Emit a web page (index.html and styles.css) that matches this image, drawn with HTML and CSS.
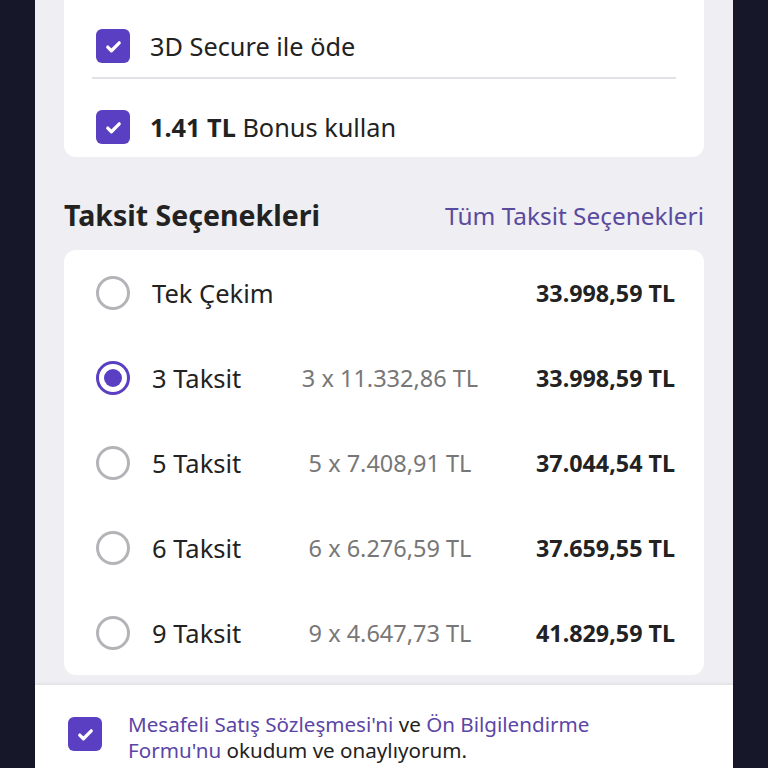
FILE: index.html
```html
<!DOCTYPE html>
<html lang="tr">
<head>
  <meta charset="UTF-8">
  <meta name="viewport" content="width=device-width, initial-scale=1.0">
  <title>Ödeme</title>
  <link rel="stylesheet" href="styles.css">
</head>
<body>
  <div class="page">
    <div class="card options">
      <label class="option">
        <span class="check"><svg viewBox="0 0 20 20"><path d="M5 10.5l3.2 3.2L15 6.8" /></svg></span>
        <span>3D Secure ile öde</span>
      </label>
      <label class="option">
        <span class="check"><svg viewBox="0 0 20 20"><path d="M5 10.5l3.2 3.2L15 6.8" /></svg></span>
        <span><b>1.41 TL</b> Bonus kullan</span>
      </label>
    </div>

    <div class="section-head">
      <h2>Taksit Seçenekleri</h2>
      <a href="#" class="link">Tüm Taksit Seçenekleri</a>
    </div>

    <div class="card installments">
      <label class="row">
        <span class="radio"></span>
        <span class="name">Tek Çekim</span>
        <span class="per"></span>
        <span class="total">33.998,59 TL</span>
      </label>
      <label class="row">
        <span class="radio selected"></span>
        <span class="name">3 Taksit</span>
        <span class="per">3 x 11.332,86 TL</span>
        <span class="total">33.998,59 TL</span>
      </label>
      <label class="row">
        <span class="radio"></span>
        <span class="name">5 Taksit</span>
        <span class="per">5 x 7.408,91 TL</span>
        <span class="total">37.044,54 TL</span>
      </label>
      <label class="row">
        <span class="radio"></span>
        <span class="name">6 Taksit</span>
        <span class="per">6 x 6.276,59 TL</span>
        <span class="total">37.659,55 TL</span>
      </label>
      <label class="row">
        <span class="radio"></span>
        <span class="name">9 Taksit</span>
        <span class="per">9 x 4.647,73 TL</span>
        <span class="total">41.829,59 TL</span>
      </label>
    </div>

    <div class="agreement">
      <span class="check"><svg viewBox="0 0 20 20"><path d="M5 10.5l3.2 3.2L15 6.8" /></svg></span>
      <div class="terms">
        <div><a href="#">Mesafeli Satış Sözleşmesi'ni</a> ve <a href="#">Ön Bilgilendirme</a></div>
        <div><a href="#">Formu'nu</a> okudum ve onaylıyorum.</div>
      </div>
    </div>
  </div>
</body>
</html>
```

FILE: styles.css
```css
body {
  margin: 0;
  background: #161728;
  font-family: "Noto Sans", "Open Sans", sans-serif;
  color: #222;
  height: 768px;
  overflow: hidden;
}
.page {
  width: 698px;
  margin-left: 35px;
  background: #eeeef3;
  min-height: 768px;
}
.card {
  background: #fff;
  border-radius: 12px;
  margin: 0 29px;
}
.options {
  border-radius: 0 0 12px 12px;
  padding: 0 28px;
}
.option {
  display: flex;
  align-items: center;
  gap: 20px;
  font-size: 25.3px;
  height: 34px;
  padding: 29px 0 14px 4px;
}
.option + .option {
  border-top: 2px solid #e2e2e6;
  padding: 31px 0 13px 4px;
}
.option b { font-weight: 700; }
.check {
  flex: none;
  width: 34px;
  height: 34px;
  border-radius: 6px;
  background: #5a3fc2;
  display: flex;
  align-items: center;
  justify-content: center;
}
.check svg {
  width: 23px;
  height: 23px;
  fill: none;
  stroke: #fff;
  stroke-width: 2.8;
  stroke-linecap: round;
  stroke-linejoin: round;
}
.section-head {
  display: flex;
  align-items: center;
  justify-content: space-between;
  padding: 40px 29px 17px;
}
.section-head h2 {
  margin: 0;
  font-size: 28.5px;
  line-height: 36px;
  font-weight: 700;
}
.link {
  color: #5a4a9e;
  font-size: 24.4px;
  text-decoration: none;
}
.row {
  display: grid;
  grid-template-columns: 34px 120px 200px 1fr;
  gap: 22px;
  align-items: center;
  height: 85px;
  padding: 0 29px 0 32px;
  font-size: 25.5px;
  white-space: nowrap;
}
.radio {
  width: 28px;
  height: 28px;
  border: 3px solid #b4b4b8;
  border-radius: 50%;
  position: relative;
}
.radio.selected { border-color: #5a3fc2; }
.radio.selected::after {
  content: "";
  position: absolute;
  left: 5px;
  top: 5px;
  width: 18px;
  height: 18px;
  border-radius: 50%;
  background: #5a3fc2;
}
.per {
  color: #777;
  font-size: 23.5px;
  text-align: center;
  margin-left: -8px;
}
.total {
  text-align: right;
  font-weight: 700;
  font-size: 23.3px;
}
.agreement {
  margin-top: 10px;
  background: #fff;
  box-shadow: 0 -1px 3px rgba(0, 0, 0, 0.08);
  display: flex;
  align-items: flex-start;
  gap: 26px;
  padding: 26px 40px 0 33px;
  height: 57px;
}
.agreement .check { margin-top: 6px; }
.terms {
  font-size: 20.6px;
  line-height: 26px;
  white-space: nowrap;
}
.terms a {
  color: #5b46a6;
  text-decoration: none;
}
```
